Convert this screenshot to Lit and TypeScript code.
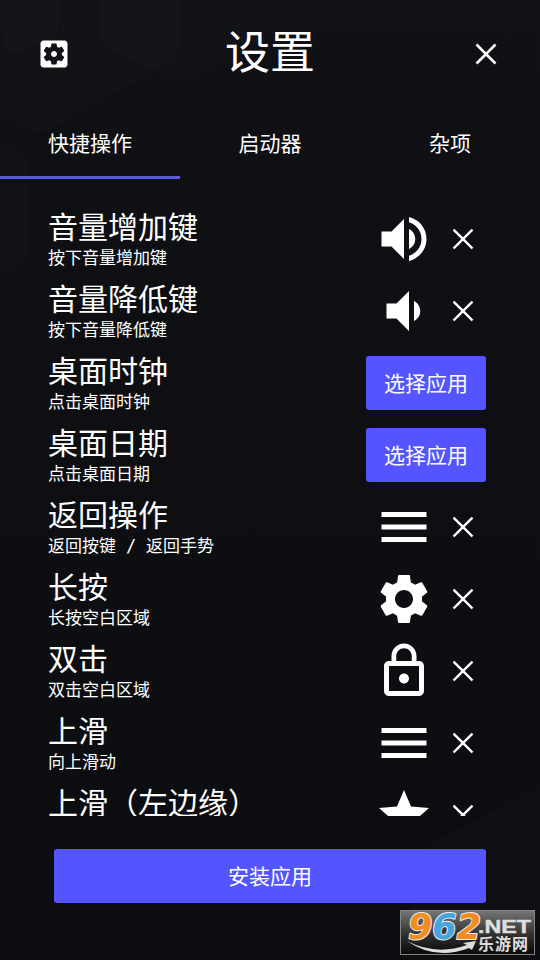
import { LitElement, html, css, svg } from "lit";
import { customElement, property } from "lit/decorators.js";

const ICONS: Record<string, string> = {
  volumeUp: "M3 9v6h4l5 5V4L7 9H3zm13.5 3c0-1.77-1.02-3.29-2.5-4.03v8.05c1.48-.73 2.5-2.25 2.5-4.02zM14 3.23v2.06c2.89.86 5 3.54 5 6.71s-2.11 5.85-5 6.71v2.06c4.01-.91 7-4.49 7-8.77s-2.99-7.86-7-8.77z",
  volumeDown: "M18.5 12c0-1.77-1.02-3.29-2.5-4.03v8.05c1.48-.73 2.5-2.25 2.5-4.02zM5 9v6h4l5 5V4L9 9H5z",
  menu: "M3 18h18v-2H3v2zm0-5h18v-2H3v2zm0-7v2h18V6H3z",
  settings: "M19.14 12.94c.04-.3.06-.61.06-.94 0-.32-.02-.64-.07-.94l2.03-1.58c.18-.14.23-.41.12-.61l-1.92-3.32c-.12-.22-.37-.29-.59-.22l-2.39.96c-.5-.38-1.03-.7-1.62-.94l-.36-2.54c-.04-.24-.24-.41-.48-.41h-3.84c-.24 0-.43.17-.47.41l-.36 2.54c-.59.24-1.13.57-1.62.94l-2.39-.96c-.22-.08-.47 0-.59.22L2.74 8.87c-.12.21-.08.47.12.61l2.03 1.58c-.05.3-.09.63-.09.94s.02.64.07.94l-2.03 1.58c-.18.14-.23.41-.12.61l1.92 3.32c.12.22.37.29.59.22l2.39-.96c.5.38 1.03.7 1.62.94l.36 2.54c.05.24.24.41.48.41h3.84c.24 0 .44-.17.47-.41l.36-2.54c.59-.24 1.13-.56 1.62-.94l2.39.96c.22.08.47 0 .59-.22l1.92-3.32c.12-.22.07-.47-.12-.61l-2.01-1.58zM12 15.6c-1.98 0-3.6-1.62-3.6-3.6s1.62-3.6 3.6-3.6 3.6 1.62 3.6 3.6-1.62 3.6-3.6 3.6z",
  lock: "M12 17c1.1 0 2-.9 2-2s-.9-2-2-2-2 .9-2 2 .9 2 2 2zm6-9h-1V6c0-2.76-2.24-5-5-5S7 3.24 7 6v2H6c-1.1 0-2 .9-2 2v10c0 1.1.9 2 2 2h12c1.1 0 2-.9 2-2V10c0-1.1-.9-2-2-2zM8.9 6c0-1.71 1.39-3.1 3.1-3.1s3.1 1.39 3.1 3.1v2H8.9V6zM18 20H6V10h12v10z",
  star: "M12 17.27L18.18 21l-1.64-7.03L22 9.24l-7.19-.61L12 2 9.19 8.63 2 9.24l5.46 4.73L5.82 21z",
  close: "M18.95 6.3L17.7 5.05 12 10.75 6.3 5.05 5.05 6.3 10.75 12 5.05 17.7 6.3 18.95 12 13.25 17.7 18.95 18.95 17.7 13.25 12z",
  clear: "M18.9 6.25L17.75 5.1 12 10.85 6.25 5.1 5.1 6.25 10.85 12 5.1 17.75 6.25 18.9 12 13.15 17.75 18.9 18.9 17.75 13.15 12z",
  settingsBox: "M12 10c-1.1 0-2 .9-2 2s.9 2 2 2 2-.9 2-2-.9-2-2-2zm7-7H5c-1.11 0-2 .9-2 2v14c0 1.1.89 2 2 2h14c1.11 0 2-.9 2-2V5c0-1.1-.89-2-2-2zm-1.75 9c0 .23-.02.46-.05.68l1.48 1.16c.13.11.17.3.08.45l-1.4 2.42c-.09.15-.27.21-.43.15l-1.74-.7c-.36.28-.76.51-1.18.69l-.26 1.85c-.03.17-.18.3-.35.3h-2.8c-.17 0-.32-.13-.35-.29l-.26-1.85c-.43-.18-.82-.41-1.18-.69l-1.74.7c-.16.06-.34 0-.43-.15l-1.4-2.42c-.09-.15-.05-.34.08-.45l1.48-1.16c-.03-.23-.05-.46-.05-.69 0-.23.02-.46.05-.68l-1.48-1.16c-.13-.11-.17-.3-.08-.45l1.4-2.42c.09-.15.27-.21.43-.15l1.74.7c.36-.28.76-.51 1.18-.69l.26-1.85c.03-.17.18-.3.35-.3h2.8c.17 0 .32.13.35.29l.26 1.85c.43.18.82.41 1.18.69l1.74-.7c.16-.06.34 0 .43.15l1.4 2.42c.09.15.05.34-.08.45l-1.48 1.16c.03.23.05.46.05.69z",
};

@customElement("app-icon")
class AppIcon extends LitElement {
  @property() name = "";
  static styles = css`
    :host { display: block; flex: none; }
    .glyph { display: block; width: 100%; height: 100%; fill: #fff; }
  `;
  render() {
    return html`<svg class="glyph" viewBox="0 0 24 24"><path d=${ICONS[this.name] ?? ""}></path></svg>`;
  }
}

@customElement("setting-row")
class SettingRow extends LitElement {
  @property() heading = "";
  @property() hint = "";
  @property() icon = "";
  static styles = css`
    :host { display: flex; align-items: center; justify-content: space-between; height: 72px; flex: none; padding: 0 54px 0 48px; }
    .text { display: flex; flex-direction: column; gap: 5px; padding-top: 1px; white-space: pre; }
    .heading { font-size: 30px; line-height: 32px; }
    .hint { font-size: 17px; line-height: 24px; word-spacing: -0.3px; font-family: "DejaVu Sans Mono", "Noto Sans CJK SC", monospace; }
    .actions { display: flex; align-items: center; }
    .icon { width: 60px; height: 60px; margin-right: 11px; }
    .clear { width: 36px; height: 36px; margin-right: 5px; }
    .pick { display: block; width: 120px; height: 54px; padding: 0 0 2px; border: 0; border-radius: 3px; background: #5555ff; color: #fff; font: inherit; font-size: 21px; line-height: 52px; }
  `;
  render() {
    return html`
      <div class="text">
        <span class="heading">${this.heading}</span>
        <span class="hint">${this.hint}</span>
      </div>
      <div class="actions">
        ${this.icon
          ? html`<app-icon class="icon" name=${this.icon}></app-icon><app-icon class="clear" name="clear"></app-icon>`
          : html`<button class="pick">选择应用</button>`}
      </div>
    `;
  }
}

const ROWS = [
  ["音量增加键", "按下音量增加键", "volumeUp"],
  ["音量降低键", "按下音量降低键", "volumeDown"],
  ["桌面时钟", "点击桌面时钟", ""],
  ["桌面日期", "点击桌面日期", ""],
  ["返回操作", "返回按键 / 返回手势", "menu"],
  ["长按", "长按空白区域", "settings"],
  ["双击", "双击空白区域", "lock"],
  ["上滑", "向上滑动", "menu"],
  ["上滑（左边缘）", "从左边缘向上滑动", "star"],
];

const HEXES = [
  "M0 116 L28 131 Q38 136 50 130 L167 66 Q180 58 180 46 V0 H0Z",
  "M60 0 V24 Q60 32 52 37 L28 51 Q18 57 8 51 L0 47 V0Z",
  "M98 0 V36 Q98 44 106 49 L170 79 Q180 84 190 79 L242 52 Q250 47 250 38 V0Z",
  "M0 142 L20 152 Q30 158 30 168 V252 Q30 261 22 265 L0 276Z",
  "M540 783 L505 803 L420 848 L400 960 H540Z",
];

@customElement("app-root")
class AppRoot extends LitElement {
  static styles = css`
    :host {
      display: block; position: relative; width: 540px; height: 960px; overflow: hidden;
      background: linear-gradient(#101115, #0d0f13 45%, #0c0d10);
      color: #fff; font-family: "Noto Sans CJK SC", sans-serif;
    }
    .backdrop { position: absolute; inset: 0; width: 540px; height: 960px; }
    .hex { fill: #fff; fill-opacity: 0.01; stroke: #000; stroke-opacity: 0.06; stroke-width: 2; }
    .page { position: relative; display: flex; flex-direction: column; height: 960px; }
    .header { display: flex; align-items: center; justify-content: space-between; height: 108px; padding: 0 36px; }
    .small { width: 36px; height: 36px; }
    .title { margin: 0; padding-bottom: 8px; font-size: 45px; line-height: 60px; font-weight: 400; }
    .tabs { display: grid; grid-template-columns: repeat(3, 1fr); height: 71px; }
    .tab { box-sizing: border-box; text-align: center; font-size: 21px; line-height: 68px; border-bottom: 3px solid transparent; }
    .tab.on { border-color: #5a58e0; }
    .list { display: flex; flex-direction: column; height: 613px; margin-top: 24px; overflow: hidden; }
    .install { height: 54px; margin: 33px 54px 0; padding: 0 0 2px; border: 0; border-radius: 3px; background: #5555ff; color: #fff; font: inherit; font-size: 21px; line-height: 52px; }
    .mark { position: absolute; left: 400px; top: 910px; width: 135px; height: 45px; }
    .digits { font: italic 700 35px "DejaVu Sans", sans-serif; stroke: #eee; stroke-width: 2px; paint-order: stroke; stroke-linejoin: round; }
    .net { font: 700 19px "Liberation Sans", sans-serif; fill: #ddd; stroke: #ddd; stroke-width: 0.5px; }
    .cn { font: 700 16px "Noto Sans CJK SC", sans-serif; fill: #ddd; }
  `;
  render() {
    return html`
      <svg class="backdrop" viewBox="0 0 540 960">${HEXES.map((d) => svg`<path class="hex" d=${d}></path>`)}</svg>
      <div class="page">
        <header class="header">
          <app-icon class="small" name="settingsBox"></app-icon>
          <h1 class="title">设置</h1>
          <app-icon class="small" name="close"></app-icon>
        </header>
        <nav class="tabs">
          <div class="tab on">快捷操作</div>
          <div class="tab">启动器</div>
          <div class="tab">杂项</div>
        </nav>
        <main class="list">
          ${ROWS.map(([h, s, i]) => html`<setting-row .heading=${h} .hint=${s} .icon=${i}></setting-row>`)}
        </main>
        <button class="install">安装应用</button>
      </div>
      <svg class="mark" viewBox="0 0 135 45">
        <defs>
          <linearGradient id="plate" x1="0" y1="0" x2="0" y2="1">
            <stop offset="0" stop-color="#777"></stop><stop offset="0.5" stop-color="#363636"></stop><stop offset="1" stop-color="#080808"></stop>
          </linearGradient>
        </defs>
        <rect x="0.5" y="0.5" width="134" height="44" fill="url(#plate)" stroke="#858585"></rect>
        <text class="digits" y="28.5" x="8"><tspan fill="#f28c1e">9</tspan><tspan fill="#45a5dc">6</tspan><tspan fill="#f28c1e">2</tspan></text>
        <text class="net" x="78" y="22.5" textLength="53" lengthAdjust="spacingAndGlyphs">.NET</text>
        <text class="cn" x="78" y="40" textLength="50" lengthAdjust="spacing">乐游网</text>
        <path d="M7 31Q36 46 67 35L63 33L76 31L72 40L69 38Q36 51 7 31Z" fill="#ddd"></path>
      </svg>
    `;
  }
}
